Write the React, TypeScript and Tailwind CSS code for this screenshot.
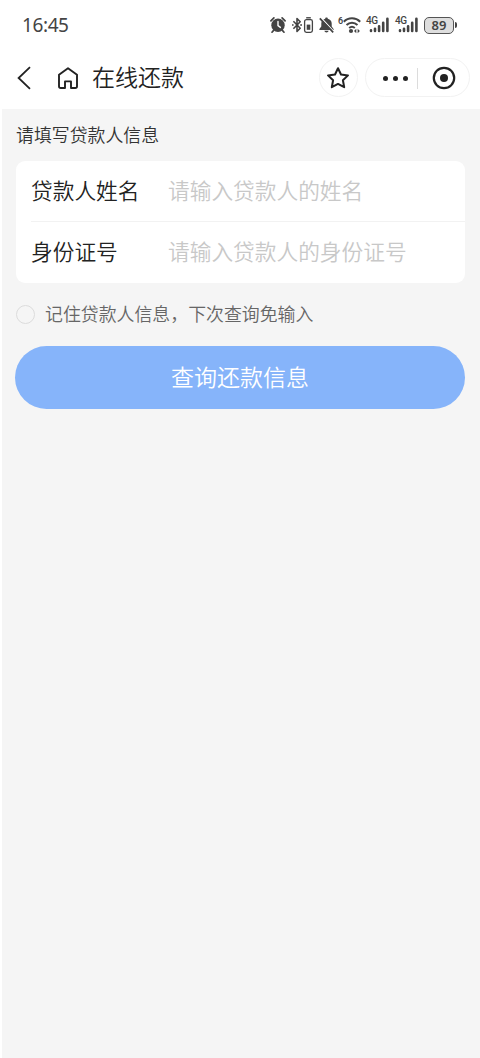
import { useState } from "react";

const fields = [
  { label: "贷款人姓名", hint: "请输入贷款人的姓名" },
  { label: "身份证号", hint: "请输入贷款人的身份证号" },
];

function AlarmIcon() {
  return (
    <svg width="16" height="18" viewBox="0 0 16 18" fill="none">
      <circle cx="8" cy="9.2" r="6.7" fill="#444" />
      <path d="M.9 4.8 3.9 1.8M15.1 4.8l-3-3M3.6 14.4 2 16.2M12.4 14.4l1.6 1.8" stroke="#444" strokeWidth="1.7" strokeLinecap="round" />
      <path d="M8 5.4v4.2l2.4 1.8" stroke="#fff" strokeWidth="1.4" strokeLinecap="round" />
    </svg>
  );
}

function BluetoothIcon() {
  return (
    <svg width="22" height="18" viewBox="0 0 22 18" fill="none" stroke="#444">
      <path d="M1.4 5.2 8.2 12.2 5 15.4V2.6l3.2 3.2L1.4 12.8" strokeWidth="1.6" strokeLinejoin="round" />
      <path d="M0 9h1.6M8.2 9h1.8" strokeWidth="1.7" />
      <rect x="12.6" y="3.6" width="7.8" height="12.8" rx="1.8" strokeWidth="1.3" />
      <path d="M14.2 1.8h4.6" strokeWidth="1.4" />
      <rect x="14.7" y="8.6" width="3.6" height="5.2" fill="#444" stroke="none" />
    </svg>
  );
}

function BellOffIcon() {
  return (
    <svg width="15" height="18" viewBox="0 0 15 18" fill="none">
      <path d="M7.5 1.6c.9 0 1.3.5 1.3 1.1 2.5.6 3.9 2.4 3.9 4.8v3l1.9 2.6v1H.4v-1l1.9-2.6v-3c0-2.4 1.4-4.2 3.9-4.8 0-.6.4-1.1 1.3-1.1Z" fill="#444" />
      <path d="M5.4 14.8h4.2c-.2 1.1-1 1.7-2.1 1.7s-1.9-.6-2.1-1.7Z" fill="#444" />
      <path d="m2 1.6 13 14" stroke="#fff" strokeWidth="1.2" />
      <path d="m.8 2.4 13.4 14" stroke="#444" strokeWidth="1.7" />
    </svg>
  );
}

function WifiIcon() {
  return (
    <svg width="18" height="18" viewBox="0 0 18 18" fill="none" stroke="#444" strokeWidth="2">
      <path d="M.8 5.8c4.6-4.6 11.8-4.6 16.4 0M3.5 9c3.2-3.1 7.8-3.1 11 0M6.2 12c1.6-1.4 4-1.4 5.6 0" />
      <circle cx="8" cy="15" r="2.1" fill="#444" stroke="none" />
      <path d="m13.3 12.7-2.3 2.3 2.3 2.3Z" fill="#444" stroke="none" />
      <path d="m14.6 12.7 2.3 2.3-2.3 2.3Z" fill="#444" stroke="none" />
    </svg>
  );
}

function Signal() {
  return (
    <div className="relative h-[18px] w-[23px]">
      <span className="absolute top-0 left-0 font-[Roboto] text-[10px] font-medium leading-[10px] tracking-[-0.5px]">4G</span>
      <svg className="absolute inset-0" width="23" height="18" viewBox="0 0 23 18" stroke="#444" strokeWidth="2.6" strokeLinecap="round">
        <path d="M5 14.4v.5M9 12.8v2.1M13.1 10.2v4.7M17.2 6.8v8.1M21.4 2.8v12.1" />
      </svg>
    </div>
  );
}

function StatusBar() {
  return (
    <div className="flex h-[50px] items-center pl-[22px] pr-[23px] text-[#444]">
      <span className="pt-px font-['Noto_Sans','Noto_Sans_CJK_SC',sans-serif] text-[19px] font-normal leading-none tracking-[-0.4px]">16:45</span>
      <div className="ml-auto flex items-center font-['Noto_Sans',sans-serif]">
        <AlarmIcon />
        <div className="ml-1.5 flex"><BluetoothIcon /></div>
        <div className="ml-[5px] flex"><BellOffIcon /></div>
        <span className="ml-[4px] w-[5px] shrink-0 self-start font-[Roboto] text-[9px] font-semibold leading-[10px]">6</span>
        <div className="flex shrink-0"><WifiIcon /></div>
        <div className="ml-[5px]"><Signal /></div>
        <div className="ml-[6px]"><Signal /></div>
        <div className="ml-[6px] flex h-[17px] w-[30px] items-center justify-center rounded-[5px] border-[1.5px] border-[#555] bg-[#dedede] text-[13px] font-semibold leading-none">
          89
        </div>
        <div className="ml-px h-1.5 w-[2px] rounded-r bg-[#444]" />
      </div>
    </div>
  );
}

function NavBar() {
  return (
    <header className="flex h-[59px] items-center pb-1 pl-[17px] pr-[10px] text-[#222]">
      <svg width="14" height="24" viewBox="0 0 14 24" fill="none" stroke="currentColor" strokeWidth="1.8">
        <path d="M13 1.2 1.6 12 13 22.8" />
      </svg>
      <svg className="ml-[26px]" width="22" height="24" viewBox="0 0 22 24" fill="none" stroke="currentColor" strokeWidth="1.9" strokeLinejoin="round">
        <path d="M2 8.8 11 2.2l9 6.6v11.4q0 1.8-1.8 1.8H14v-6.6H8V22H3.8Q2 22 2 20.2Z" />
      </svg>
      <h1 className="ml-[13px] pb-0.5 text-[23px] font-[350] leading-none">在线还款</h1>
      <div className="ml-auto flex size-[39px] items-center justify-center rounded-full border border-[#f2f2f2] pr-px pt-px">
        <svg width="24" height="24" viewBox="0 0 24 24" fill="none" stroke="currentColor" strokeWidth="2" strokeLinejoin="round">
          <path d="m12 2.2 3 6.3 7 .9-5.1 4.9 1.3 6.9L12 17.9l-6.2 3.3 1.3-6.9L2 9.4l7-.9Z" />
        </svg>
      </div>
      <div className="ml-[7px] flex h-[39px] w-[105px] items-center rounded-full border border-[#f2f2f2] pt-px">
        <div className="ml-[17px] flex gap-[5px]">
          <i className="size-[5px] rounded-full bg-[#222]" />
          <i className="size-[5px] rounded-full bg-[#222]" />
          <i className="size-[5px] rounded-full bg-[#222]" />
        </div>
        <div className="ml-[9px] h-[21px] w-px bg-[#dcdcdc]" />
        <svg className="ml-[13.5px]" width="24" height="24" viewBox="0 0 24 24" fill="none">
          <circle cx="12" cy="12" r="10.2" stroke="#222" strokeWidth="2.2" />
          <circle cx="12" cy="12" r="4" fill="#222" />
        </svg>
      </div>
    </header>
  );
}

export default function App() {
  const [remember, setRemember] = useState(false);

  return (
    <div className="flex h-[1058px] w-[480px] flex-col overflow-hidden bg-white font-['Noto_Sans_CJK_SC',sans-serif] font-[350]">
      <StatusBar />
      <NavBar />
      <main className="ml-[2px] flex-1 bg-[#f5f5f5] pl-[14px] pr-[15px]">
        <p className="pt-[12px] text-[17.9px] leading-[26px] text-[#333]">请填写贷款人信息</p>
        <section className="mt-[14px] h-[122px] rounded-[9px] bg-white pl-[15px]">
          {fields.map((field) => (
            <div key={field.label} className="flex h-[61px] items-center border-b border-[#f2f2f2] pb-[3px] text-[21.7px] leading-none last:border-b-0">
              <span className="w-[137px] text-[#222]">{field.label}</span>
              <span className="text-[#c8c8c8]">{field.hint}</span>
            </div>
          ))}
        </section>
        <button
          type="button"
          onClick={() => setRemember(!remember)}
          className="mt-[18px] flex h-[26px] items-center text-[17.9px] leading-none text-[#666]"
        >
          <span className={`mr-[10px] size-[19px] rounded-full border border-[#dcdcdc] ${remember ? "bg-[#86b4fa]" : ""}`} />
          记住贷款人信息，下次查询免输入
        </button>
        <button type="button" className="-ml-px mt-[19px] flex h-[63px] w-[450px] items-center justify-center rounded-full bg-[#86b4fa] pb-[3px] text-[23px] leading-none text-white">
          查询还款信息
        </button>
      </main>
    </div>
  );
}
